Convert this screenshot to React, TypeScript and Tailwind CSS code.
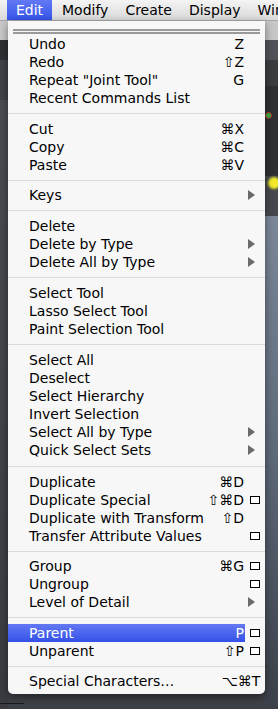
import React from 'react';

type Item = {
  label?: string;
  keys?: string;
  box?: boolean;
  sub?: boolean;
  active?: boolean;
  sep?: number;
  keysRight?: boolean;
};

const items: Item[] = [
  { label: 'Undo', keys: 'Z' },
  { label: 'Redo', keys: '⇧Z' },
  { label: 'Repeat "Joint Tool"', keys: 'G' },
  { label: 'Recent Commands List' },
  { sep: 13 },
  { label: 'Cut', keys: '⌘X' },
  { label: 'Copy', keys: '⌘C' },
  { label: 'Paste', keys: '⌘V' },
  { sep: 12 },
  { label: 'Keys', sub: true },
  { sep: 13 },
  { label: 'Delete' },
  { label: 'Delete by Type', sub: true },
  { label: 'Delete All by Type', sub: true },
  { sep: 13 },
  { label: 'Select Tool' },
  { label: 'Lasso Select Tool' },
  { label: 'Paint Selection Tool' },
  { sep: 13 },
  { label: 'Select All' },
  { label: 'Deselect' },
  { label: 'Select Hierarchy' },
  { label: 'Invert Selection' },
  { label: 'Select All by Type', sub: true },
  { label: 'Quick Select Sets', sub: true },
  { sep: 14 },
  { label: 'Duplicate', keys: '⌘D' },
  { label: 'Duplicate Special', keys: '⇧⌘D', box: true },
  { label: 'Duplicate with Transform', keys: '⇧D' },
  { label: 'Transfer Attribute Values', box: true },
  { sep: 12 },
  { label: 'Group', keys: '⌘G', box: true },
  { label: 'Ungroup', box: true },
  { label: 'Level of Detail', sub: true },
  { sep: 13 },
  { label: 'Parent', keys: 'P', box: true, active: true },
  { label: 'Unparent', keys: '⇧P', box: true },
  { sep: 12 },
  { label: 'Special Characters…', keys: '⌥⌘T', keysRight: true },
];

const OptionBox = () => (
  <div className="w-[10px] h-[8px] border border-black bg-white" />
);

const Arrow = () => (
  <svg width="7" height="10" viewBox="0 0 7 10" className="mr-[7px]">
    <path d="M0 0 L7 5 L0 10 Z" fill="#6a6a6a" />
  </svg>
);

const MenuRow = ({ item }: { item: Item }) => {
  if (item.sep) {
    return (
      <div className="flex items-center" style={{ height: item.sep }}>
        <div className="h-px w-full bg-[#dadada]" />
      </div>
    );
  }
  return (
    <div className="flex h-[18px] items-center">
      <div
        className={`flex h-full w-[237px] shrink-0 items-center pl-[21px] ${
          item.active ? 'bg-gradient-to-b from-[#6378f3] to-[#3550e8] text-white' : 'text-black'
        }`}
      >
        <span className="flex-1 whitespace-nowrap">{item.label}</span>
        {item.keys && !item.keysRight && <span className="pr-[1px]">{item.keys}</span>}
      </div>
      <div className="flex w-[20px] shrink-0 items-center justify-center">
        {item.box && <OptionBox />}
        {item.sub && <Arrow />}
        {item.keysRight && <span className="-ml-[28px] whitespace-nowrap">{item.keys}</span>}
      </div>
    </div>
  );
};

export default function App() {
  return (
    <div
      className="relative h-[709px] w-[278px] overflow-hidden bg-[#3d4046] text-[14px] leading-none"
      style={{ fontFamily: '"Lucida Grande", "DejaVu Sans", sans-serif' }}
    >
      {/* menu bar */}
      <div className="flex h-[21px] items-center overflow-hidden whitespace-nowrap bg-gradient-to-b from-[#f4f4f4] to-[#d9d9d9] border-b border-[#a8a8a8]">
        <div className="ml-[7px] flex h-full w-[45px] shrink-0 items-center justify-center bg-gradient-to-b from-[#6379f4] to-[#3553e9] text-white">
          Edit
        </div>
        <span className="ml-[10px] shrink-0">Modify</span>
        <span className="ml-[17px] shrink-0">Create</span>
        <span className="ml-[17px] shrink-0">Display</span>
        <span className="ml-[17px] shrink-0">Win</span>
      </div>

      {/* app behind the menu */}
      <div className="flex h-[688px]">
        <div className="flex w-[8px] flex-col">
          <div className="h-[19px] bg-[#c9c9c9]" />
          <div className="h-[20px] bg-[#2f3033]" />
          <div className="h-[40px] bg-[#404247]" />
          <div className="flex-1 bg-gradient-to-b from-[#4a4d53] to-[#3a3c41]" />
        </div>
        <div className="w-[257px]" />
        <div className="flex w-[13px] flex-col">
          <div className="h-[19px] bg-[#c6c6c6]" />
          <div className="h-[20px] bg-[#505358]" />
          <div className="h-[26px] bg-[#3b3d41]" />
          <div className="h-[90px] bg-[#2e3034]" />
          <div className="h-[40px] bg-[#45484d]" />
          <div className="flex-1 bg-gradient-to-b from-[#7c889a] via-[#5d6878] to-[#3b4049]" />
        </div>
      </div>
      <div className="absolute left-[268px] top-[177px] h-[12px] w-[12px] rounded-full bg-[#f2ea2a] blur-[1px]" />
      <div className="absolute left-[265px] top-[112px] h-[7px] w-[7px] rounded-full border border-[#c02a2a] bg-[#3fae3f]" />
      <div className="absolute left-[0px] top-[703px] h-px w-[24px] bg-[#1a1a1a]" />

      {/* dropdown */}
      <div className="absolute left-[8px] top-[21px] w-[257px] rounded-b-[5px] bg-[#f7f7f8] pt-[4px] pb-[4px] shadow-[0_3px_8px_rgba(0,0,0,0.45)]">
        <div className="flex h-[10px] flex-col gap-px px-[5px] pt-[4px]">
          <div className="h-[2px] bg-[#9a9a9a]" />
          <div className="h-[2px] bg-[#9a9a9a]" />
        </div>
        {items.map((item, i) => (
          <MenuRow key={i} item={item} />
        ))}
      </div>
    </div>
  );
}
